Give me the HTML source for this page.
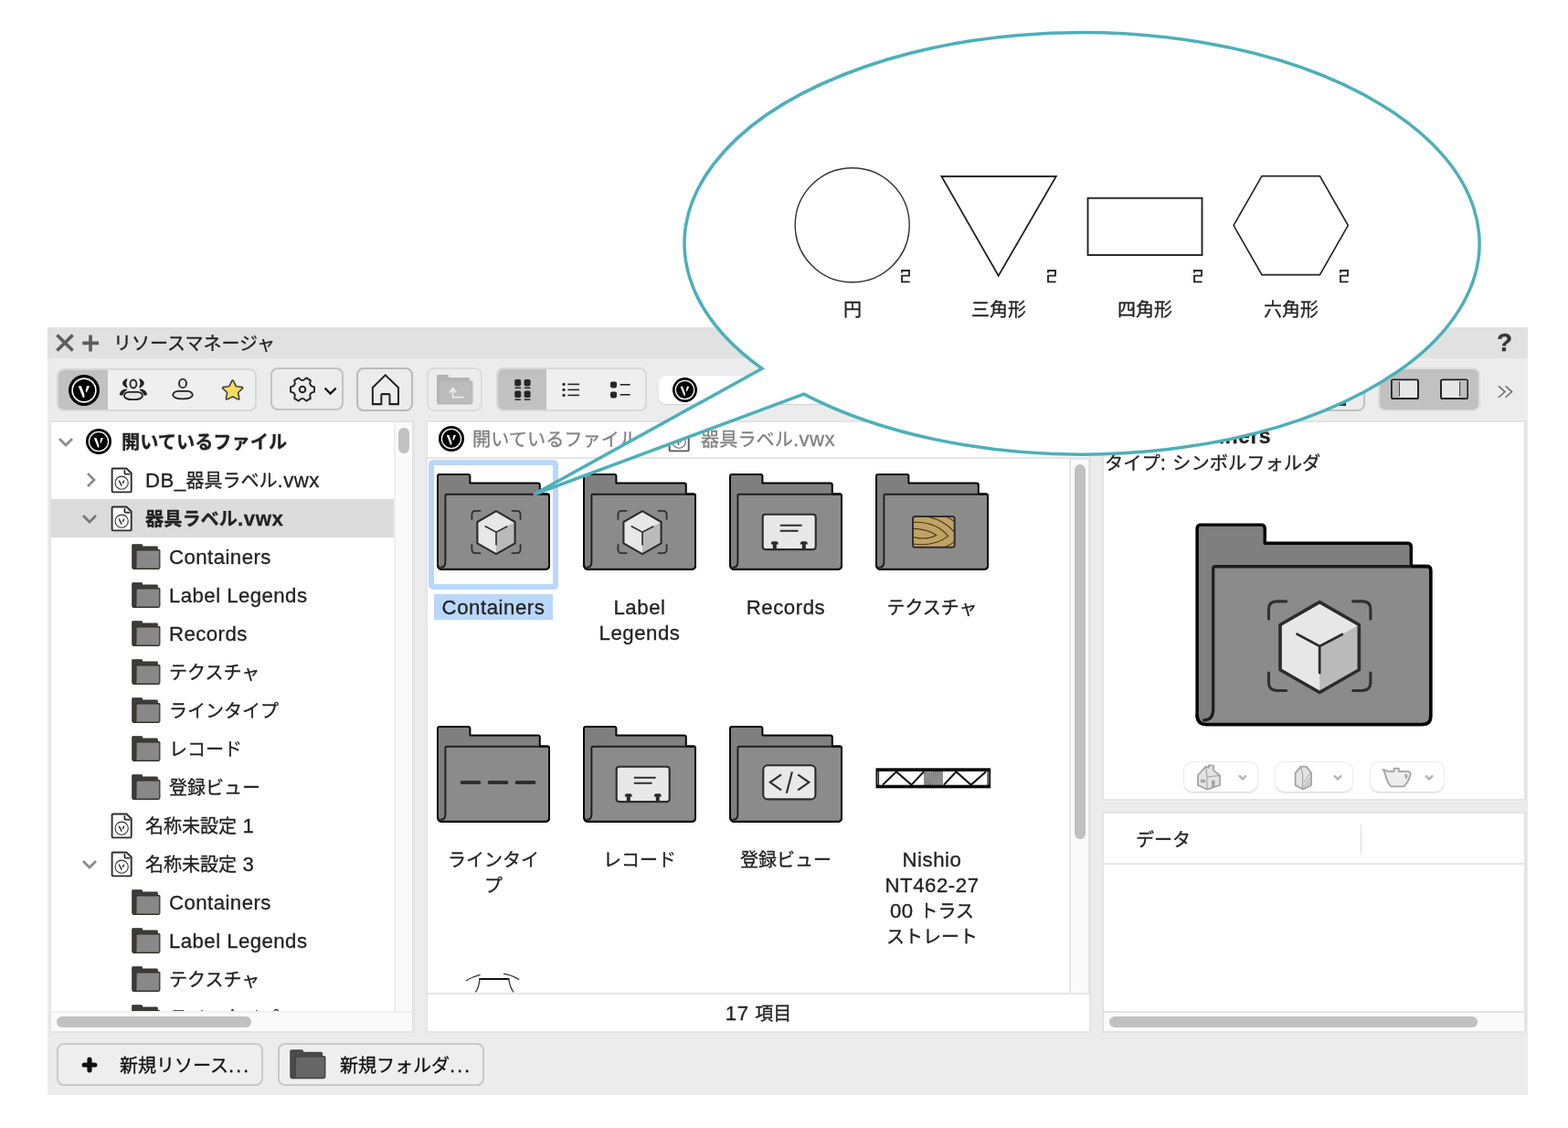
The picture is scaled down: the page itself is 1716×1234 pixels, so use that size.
<!DOCTYPE html>
<html lang="ja"><head><meta charset="utf-8"><title>リソースマネージャ</title>
<style>
html,body{margin:0;padding:0;background:#fff;}
body{width:1716px;height:1234px;position:relative;overflow:hidden;font-family:"Liberation Sans",sans-serif;}
div{position:absolute;box-sizing:border-box;}
.t{white-space:nowrap;will-change:transform;-webkit-text-stroke:0.3px;}
span.jp{font-family:"Liberation Sans","Noto Sans CJK JP",sans-serif;font-size:20px;letter-spacing:0;}
.ctr{text-align:center;white-space:nowrap;will-change:transform;-webkit-text-stroke:0.3px;}
</style></head>
<body>
<div style="left:52px;top:358px;width:1620px;height:840px;background:#ececec;"></div>
<div style="left:52px;top:358px;width:1620px;height:34px;background:#e1e1e1;"></div>
<svg style="position:absolute;left:58px;top:362px;" width="54" height="26" viewBox="0 0 54 26" preserveAspectRatio="none"><path d="M4.4 4.4 L21.6 21.6 M21.6 4.4 L4.4 21.6" stroke="#5c5c5c" stroke-width="3.6" fill="none"/><path d="M41 4.6 V22.4 M32.2 13.4 H50" stroke="#5c5c5c" stroke-width="3.6" fill="none"/></svg>
<div class="t" style="left:124px;top:362.0px;height:28px;line-height:28px;font-size:22.2px;color:#222;font-weight:normal;letter-spacing:0.45px;"><span class="jp" style="color:#222;">リソースマネージャ</span></div>
<div class="t" style="left:1637.6px;top:360.4px;height:30px;line-height:30px;font-size:28px;color:#363636;font-weight:bold;letter-spacing:0px;">?</div>
<div style="left:62px;top:402.5px;width:219px;height:47px;background:#efefef;border:2px solid #d8d8d8;border-radius:8px;overflow:hidden;"><div style="left:-2px;top:-2px;width:56px;height:47px;background:#c1c1c1;"></div></div>
<svg style="position:absolute;left:75px;top:409.5px;" width="34" height="34" viewBox="0 0 28 28" preserveAspectRatio="none"><circle cx="14" cy="14" r="14" fill="#000"/><circle cx="14" cy="14" r="10.6" fill="none" stroke="#fff" stroke-width="1.3"/><path d="M8.8 10 L11.4 10 L14.3 17.8 L14.3 20.6 L13 20.6 Z M16.4 10 L19 10 L16.2 16.2 L15.4 14.4 Z" fill="#fff"/></svg>
<svg style="position:absolute;left:120px;top:400px;" width="160" height="55" viewBox="0 0 160 55" preserveAspectRatio="none"><g fill="#e6e6e6" stroke="#222" stroke-width="1.8"><ellipse cx="25.9" cy="20" rx="3.5" ry="4.5"/><path d="M21 28.8 H30.8 Q35.4 29 36 33 Q35.4 37.2 25.9 37.2 Q16.4 37.2 15.8 33 Q16.4 29 21 28.8 Z"/><ellipse cx="80" cy="19.4" rx="4" ry="4.8"/><path d="M75 27.8 H85 Q90.2 28 90.8 32.2 Q90.2 36.4 80 36.4 Q69.8 36.4 69.2 32.2 Q69.8 28 75 27.8 Z"/></g><g fill="#222"><path d="M18.6 15 Q11 19.4 18.8 23.6 Q16.2 19.4 18.6 15 Z" stroke="#222" stroke-width="1.6" stroke-linejoin="round"/><path d="M33.2 15 Q40.8 19.4 33 23.6 Q35.6 19.4 33.2 15 Z" stroke="#222" stroke-width="1.6" stroke-linejoin="round"/><path d="M11.4 31.6 Q12.4 26.8 18.4 26.2 Q15 28.4 13.6 32 Z" stroke="#222" stroke-width="1.3" stroke-linejoin="round"/><path d="M40.4 31.6 Q39.4 26.8 33.4 26.2 Q36.8 28.4 38.2 32 Z" stroke="#222" stroke-width="1.3" stroke-linejoin="round"/></g><path d="M133.8 16.6 Q134.6 15.2 135.4 16.6 L138.3 22.6 L144.8 23.5 Q146.4 23.9 145.3 25.1 L140.6 29.6 L141.8 36 Q142 37.6 140.5 36.9 L134.6 33.8 L128.7 36.9 Q127.2 37.6 127.4 36 L128.6 29.6 L123.9 25.1 Q122.8 23.9 124.4 23.5 L130.9 22.6 Z" fill="#f7dc5f" stroke="#333" stroke-width="1.4" stroke-linejoin="round"/></svg>
<div style="left:296px;top:401.8px;width:79.5px;height:47.6px;background:#ececec;border:2px solid #c2c2c2;border-radius:8px;"></div>
<svg style="position:absolute;left:313.9px;top:409px;" width="34" height="34" viewBox="0 0 34 34" preserveAspectRatio="none"><g fill="none" stroke="#222" stroke-width="1.9" stroke-linejoin="round"><path d="M26.41 13.07 L30.02 14.30 L30.02 19.70 L26.41 20.93 L25.11 23.19 L25.85 26.93 L21.18 29.63 L18.30 27.12 L15.70 27.12 L12.82 29.63 L8.15 26.93 L8.89 23.19 L7.59 20.93 L3.98 19.70 L3.98 14.30 L7.59 13.07 L8.89 10.81 L8.15 7.07 L12.82 4.37 L15.70 6.88 L18.30 6.88 L21.18 4.37 L25.85 7.07 L25.11 10.81 Z"/><circle cx="17" cy="17" r="3.3"/></g></svg>
<svg style="position:absolute;left:353px;top:421px;" width="18" height="14" viewBox="0 0 18 14" preserveAspectRatio="none"><path d="M2.6 3.6 L8.6 9.6 L14.6 3.6" fill="none" stroke="#111" stroke-width="2.2"/></svg>
<div style="left:390px;top:402px;width:62px;height:47.5px;background:#ececec;border:2px solid #bababa;border-radius:8px;"></div>
<svg style="position:absolute;left:405px;top:407px;" width="34.2" height="38.6" viewBox="0 0 36 40" preserveAspectRatio="none"><path d="M3 17.6 L17.6 3.4 L32.6 17.6 V36.4 H22.6 V26 Q22.6 25 21.6 25 H14 Q13 25 13 26 V36.4 H3 Z" fill="none" stroke="#222" stroke-width="2.1" stroke-linejoin="miter"/></svg>
<div style="left:467px;top:402px;width:61px;height:47.5px;background:#ececec;border:2px solid #dbdbdb;border-radius:8px;"></div>
<svg style="position:absolute;left:477px;top:409px;" width="41" height="34" viewBox="0 0 41 34" preserveAspectRatio="none"><path d="M1 2 Q1 1 2 1 H13 Q14 1 14 2 V4 H36 Q37 4 37 5 V9 H4 V30 Q4 32.6 1 32.6 Z" fill="#b4b4b4"/><path d="M4.6 8 H39 Q40 8 40 9 V31 Q40 33 38 33 H2 Q4.6 32.6 4.6 30 Z" fill="#bcbcbc" stroke="#b0b0b0" stroke-width="0.8"/><path d="M15 20.4 L18.6 15.8 L22.2 20.4 M18.6 16.4 V25.6 H30.4" fill="none" stroke="#ececec" stroke-width="1.8"/></svg>
<div style="left:543px;top:402px;width:165px;height:47.5px;background:#efefef;border:2px solid #d8d8d8;border-radius:8px;overflow:hidden;"><div style="left:-2px;top:-2px;width:55px;height:48px;background:#c1c1c1;"></div></div>
<svg style="position:absolute;left:560px;top:413px;" width="24" height="28" viewBox="0 0 24 28" preserveAspectRatio="none"><g fill="#262626"><rect x="3.2" y="2" width="7" height="7.4" rx="1.8"/><rect x="13.6" y="2" width="7" height="7.4" rx="1.8"/><rect x="3.2" y="14.6" width="7" height="7.4" rx="1.8"/><rect x="13.6" y="14.6" width="7" height="7.4" rx="1.8"/><rect x="3.4" y="10.6" width="6.6" height="1.5"/><rect x="13.8" y="10.6" width="6.6" height="1.5"/><rect x="3.4" y="23.4" width="6.6" height="1.5"/><rect x="13.8" y="23.4" width="6.6" height="1.5"/></g></svg>
<svg style="position:absolute;left:613px;top:416px;" width="24" height="22" viewBox="0 0 24 22" preserveAspectRatio="none"><g fill="#262626"><circle cx="4" cy="4.4" r="1.6"/><circle cx="4" cy="10.4" r="1.6"/><circle cx="4" cy="16.4" r="1.6"/><rect x="8.4" y="3.6" width="12.6" height="1.6"/><rect x="8.4" y="9.6" width="12.6" height="1.6"/><rect x="8.4" y="15.6" width="12.6" height="1.6"/></g></svg>
<svg style="position:absolute;left:666px;top:415px;" width="26" height="24" viewBox="0 0 26 24" preserveAspectRatio="none"><g fill="#262626"><rect x="2" y="2.4" width="7" height="7" rx="1.8"/><rect x="2" y="13.4" width="7" height="7" rx="1.8"/><rect x="12.6" y="5" width="11" height="1.6"/><rect x="12.6" y="16" width="11" height="1.6"/></g></svg>
<div style="left:721px;top:411px;width:480px;height:31px;background:#fff;border-radius:8px;box-shadow:0 1px 1px rgba(0,0,0,0.12);"></div>
<svg style="position:absolute;left:736.1px;top:412.7px;" width="27.0" height="27.0" viewBox="0 0 28 28" preserveAspectRatio="none"><circle cx="14" cy="14" r="14" fill="#000"/><circle cx="14" cy="14" r="10.6" fill="none" stroke="#fff" stroke-width="1.3"/><path d="M8.8 10 L11.4 10 L14.3 17.8 L14.3 20.6 L13 20.6 Z M16.4 10 L19 10 L16.2 16.2 L15.4 14.4 Z" fill="#fff"/></svg>
<div style="left:1300px;top:403px;width:194px;height:47px;background:#ececec;border:2px solid #c2c2c2;border-radius:8px;"></div>
<div style="left:1462px;top:440.4px;width:11.4px;height:3.6px;background:#333;"></div>
<div style="left:1508px;top:402px;width:112px;height:48px;background:#c1c1c1;border:2px solid #dedede;border-radius:8px;"></div>
<svg style="position:absolute;left:1521px;top:413px;" width="34" height="26" viewBox="0 0 34 26" preserveAspectRatio="none"><rect x="2" y="2.4" width="29" height="20.6" rx="1.6" fill="#e6e6e6" stroke="#1c1c1c" stroke-width="1.9"/><path d="M10.2 4.6 V20.8" stroke="#222" stroke-width="1.2"/><rect x="2.8" y="3.2" width="7" height="19" fill="#bdbdbd"/></svg>
<svg style="position:absolute;left:1575px;top:413px;" width="34" height="26" viewBox="0 0 34 26" preserveAspectRatio="none"><rect x="2" y="2.4" width="29" height="20.6" rx="1.6" fill="#e6e6e6" stroke="#1c1c1c" stroke-width="1.9"/><path d="M22.8 4.6 V20.8" stroke="#222" stroke-width="1.2"/><rect x="23.4" y="3.2" width="7" height="19" fill="#bdbdbd"/></svg>
<svg style="position:absolute;left:1637px;top:419px;" width="22" height="18" viewBox="0 0 22 18" preserveAspectRatio="none"><path d="M3 3.4 L10 9.6 L3 15.8 M10.6 3.4 L17.6 9.6 L10.6 15.8" fill="none" stroke="#6a6a6a" stroke-width="1.5"/></svg>
<div style="left:54px;top:460px;width:400px;height:670px;background:#e4e4e4;"></div>
<div class="lp" style="left:56px;top:462px;width:375px;height:644px;background:#fff;overflow:hidden;"></div>
<div style="left:433px;top:462px;width:18px;height:644px;background:#fafafa;"></div>
<div style="left:436px;top:468px;width:12px;height:28px;background:#c1c1c1;border-radius:6px;"></div>
<div style="left:56px;top:1108px;width:395px;height:20px;background:#fafafa;"></div>
<div style="left:62px;top:1112px;width:213px;height:12px;background:#c1c1c1;border-radius:6px;"></div>
<div style="left:431px;top:462px;width:2px;height:646px;background:#efefef;"></div>
<div style="left:56px;top:1106px;width:395px;height:2px;background:#efefef;"></div>
<div style="left:0;top:0;width:431px;height:1106px;overflow:hidden;"><div style="left:56px;top:546px;width:375px;height:42px;background:#dcdcdc;"></div><svg style="position:absolute;left:62px;top:476.5px;" width="20" height="14" viewBox="0 0 20 14" preserveAspectRatio="none"><path d="M3 3 L10 10 L17 3" fill="none" stroke="#8a8a8a" stroke-width="2.7"/></svg><svg style="position:absolute;left:94px;top:469px;" width="28" height="28" viewBox="0 0 28 28" preserveAspectRatio="none"><circle cx="14" cy="14" r="14" fill="#000"/><circle cx="14" cy="14" r="10.6" fill="none" stroke="#fff" stroke-width="1.3"/><path d="M8.8 10 L11.4 10 L14.3 17.8 L14.3 20.6 L13 20.6 Z M16.4 10 L19 10 L16.2 16.2 L15.4 14.4 Z" fill="#fff"/></svg><div class="t" style="left:132.5px;top:470.0px;height:28px;line-height:28px;font-size:22.2px;color:#222;font-weight:normal;letter-spacing:0.45px;"><span class="jp" style="color:#222;font-weight:bold;font-size:20.2px;">開いているファイル</span></div><svg style="position:absolute;left:93px;top:514.5px;" width="14" height="20" viewBox="0 0 14 20" preserveAspectRatio="none"><path d="M3 3 L10 10 L3 17" fill="none" stroke="#8a8a8a" stroke-width="2.7"/></svg><svg style="position:absolute;left:121px;top:510.8px;" width="24.5" height="29" viewBox="0 0 24.5 29" preserveAspectRatio="none"><path d="M1.6 2.6 Q1.6 1.5 2.7 1.5 H17.4 L22.7 6.5 V26.3 Q22.7 27.4 21.6 27.4 H2.7 Q1.6 27.4 1.6 26.3 Z" fill="#fff" stroke="#2c2c2c" stroke-width="1.9" stroke-linejoin="round"/><path d="M15.4 3.9 V6.6 Q15.4 7.7 16.5 7.7 H20.6" fill="none" stroke="#2c2c2c" stroke-width="1.8" stroke-linecap="round"/><circle cx="12.15" cy="17.2" r="7.1" fill="none" stroke="#2c2c2c" stroke-width="1.1"/><path d="M9.2 14.6 L12.2 20.6 M14.8 14.6 L13.3 18" fill="none" stroke="#2c2c2c" stroke-width="1.4"/></svg><div class="t" style="left:158.5px;top:512.0px;height:28px;line-height:28px;font-size:22.2px;color:#222;font-weight:normal;letter-spacing:0.45px;">DB_<span class="jp" style="color:#222;">器具ラベル</span>.vwx</div><svg style="position:absolute;left:88px;top:560.5px;" width="20" height="14" viewBox="0 0 20 14" preserveAspectRatio="none"><path d="M3 3 L10 10 L17 3" fill="none" stroke="#777" stroke-width="2.7"/></svg><svg style="position:absolute;left:121px;top:552.8px;" width="24.5" height="29" viewBox="0 0 24.5 29" preserveAspectRatio="none"><path d="M1.6 2.6 Q1.6 1.5 2.7 1.5 H17.4 L22.7 6.5 V26.3 Q22.7 27.4 21.6 27.4 H2.7 Q1.6 27.4 1.6 26.3 Z" fill="#fff" stroke="#2c2c2c" stroke-width="1.9" stroke-linejoin="round"/><path d="M15.4 3.9 V6.6 Q15.4 7.7 16.5 7.7 H20.6" fill="none" stroke="#2c2c2c" stroke-width="1.8" stroke-linecap="round"/><circle cx="12.15" cy="17.2" r="7.1" fill="none" stroke="#2c2c2c" stroke-width="1.1"/><path d="M9.2 14.6 L12.2 20.6 M14.8 14.6 L13.3 18" fill="none" stroke="#2c2c2c" stroke-width="1.4"/></svg><div class="t" style="left:158.5px;top:554.0px;height:28px;line-height:28px;font-size:22.2px;color:#222;font-weight:bold;letter-spacing:0.6px;"><span class="jp" style="color:#222;font-weight:bold;font-size:20.2px;">器具ラベル</span>.vwx</div><svg style="position:absolute;left:144px;top:595px;" width="31.5" height="28.2" viewBox="0 0 31.5 27.5" preserveAspectRatio="none"><path d="M0.8 1.6 Q0.8 0.8 1.6 0.8 H10.6 Q11.4 0.8 11.4 1.6 V3 H27.4 Q28.2 3 28.2 3.8 V8 H4.6 V24.4 Q4.6 26.6 2.4 26.6 Q0.8 26.6 0.8 24.6 Z" fill="#3c3c3c" stroke="#37332c" stroke-width="1.2" stroke-linejoin="round"/><path d="M5 6.6 H30 Q30.8 6.6 30.8 7.4 V25.2 Q30.8 26.6 29.4 26.6 H2.6 Q4.8 26.4 4.8 24 Z" fill="#888" stroke="#37332c" stroke-width="1.3" stroke-linejoin="round"/></svg><div class="t" style="left:184.5px;top:596.0px;height:28px;line-height:28px;font-size:22.2px;color:#222;font-weight:normal;letter-spacing:0.45px;">Containers</div><svg style="position:absolute;left:144px;top:637px;" width="31.5" height="28.2" viewBox="0 0 31.5 27.5" preserveAspectRatio="none"><path d="M0.8 1.6 Q0.8 0.8 1.6 0.8 H10.6 Q11.4 0.8 11.4 1.6 V3 H27.4 Q28.2 3 28.2 3.8 V8 H4.6 V24.4 Q4.6 26.6 2.4 26.6 Q0.8 26.6 0.8 24.6 Z" fill="#3c3c3c" stroke="#37332c" stroke-width="1.2" stroke-linejoin="round"/><path d="M5 6.6 H30 Q30.8 6.6 30.8 7.4 V25.2 Q30.8 26.6 29.4 26.6 H2.6 Q4.8 26.4 4.8 24 Z" fill="#888" stroke="#37332c" stroke-width="1.3" stroke-linejoin="round"/></svg><div class="t" style="left:184.5px;top:638.0px;height:28px;line-height:28px;font-size:22.2px;color:#222;font-weight:normal;letter-spacing:0.45px;">Label Legends</div><svg style="position:absolute;left:144px;top:679px;" width="31.5" height="28.2" viewBox="0 0 31.5 27.5" preserveAspectRatio="none"><path d="M0.8 1.6 Q0.8 0.8 1.6 0.8 H10.6 Q11.4 0.8 11.4 1.6 V3 H27.4 Q28.2 3 28.2 3.8 V8 H4.6 V24.4 Q4.6 26.6 2.4 26.6 Q0.8 26.6 0.8 24.6 Z" fill="#3c3c3c" stroke="#37332c" stroke-width="1.2" stroke-linejoin="round"/><path d="M5 6.6 H30 Q30.8 6.6 30.8 7.4 V25.2 Q30.8 26.6 29.4 26.6 H2.6 Q4.8 26.4 4.8 24 Z" fill="#888" stroke="#37332c" stroke-width="1.3" stroke-linejoin="round"/></svg><div class="t" style="left:184.5px;top:680.0px;height:28px;line-height:28px;font-size:22.2px;color:#222;font-weight:normal;letter-spacing:0.45px;">Records</div><svg style="position:absolute;left:144px;top:721px;" width="31.5" height="28.2" viewBox="0 0 31.5 27.5" preserveAspectRatio="none"><path d="M0.8 1.6 Q0.8 0.8 1.6 0.8 H10.6 Q11.4 0.8 11.4 1.6 V3 H27.4 Q28.2 3 28.2 3.8 V8 H4.6 V24.4 Q4.6 26.6 2.4 26.6 Q0.8 26.6 0.8 24.6 Z" fill="#3c3c3c" stroke="#37332c" stroke-width="1.2" stroke-linejoin="round"/><path d="M5 6.6 H30 Q30.8 6.6 30.8 7.4 V25.2 Q30.8 26.6 29.4 26.6 H2.6 Q4.8 26.4 4.8 24 Z" fill="#888" stroke="#37332c" stroke-width="1.3" stroke-linejoin="round"/></svg><div class="t" style="left:184.5px;top:722.0px;height:28px;line-height:28px;font-size:22.2px;color:#222;font-weight:normal;letter-spacing:0.45px;"><span class="jp" style="color:#222;">テクスチャ</span></div><svg style="position:absolute;left:144px;top:763px;" width="31.5" height="28.2" viewBox="0 0 31.5 27.5" preserveAspectRatio="none"><path d="M0.8 1.6 Q0.8 0.8 1.6 0.8 H10.6 Q11.4 0.8 11.4 1.6 V3 H27.4 Q28.2 3 28.2 3.8 V8 H4.6 V24.4 Q4.6 26.6 2.4 26.6 Q0.8 26.6 0.8 24.6 Z" fill="#3c3c3c" stroke="#37332c" stroke-width="1.2" stroke-linejoin="round"/><path d="M5 6.6 H30 Q30.8 6.6 30.8 7.4 V25.2 Q30.8 26.6 29.4 26.6 H2.6 Q4.8 26.4 4.8 24 Z" fill="#888" stroke="#37332c" stroke-width="1.3" stroke-linejoin="round"/></svg><div class="t" style="left:184.5px;top:764.0px;height:28px;line-height:28px;font-size:22.2px;color:#222;font-weight:normal;letter-spacing:0.45px;"><span class="jp" style="color:#222;">ラインタイプ</span></div><svg style="position:absolute;left:144px;top:805px;" width="31.5" height="28.2" viewBox="0 0 31.5 27.5" preserveAspectRatio="none"><path d="M0.8 1.6 Q0.8 0.8 1.6 0.8 H10.6 Q11.4 0.8 11.4 1.6 V3 H27.4 Q28.2 3 28.2 3.8 V8 H4.6 V24.4 Q4.6 26.6 2.4 26.6 Q0.8 26.6 0.8 24.6 Z" fill="#3c3c3c" stroke="#37332c" stroke-width="1.2" stroke-linejoin="round"/><path d="M5 6.6 H30 Q30.8 6.6 30.8 7.4 V25.2 Q30.8 26.6 29.4 26.6 H2.6 Q4.8 26.4 4.8 24 Z" fill="#888" stroke="#37332c" stroke-width="1.3" stroke-linejoin="round"/></svg><div class="t" style="left:184.5px;top:806.0px;height:28px;line-height:28px;font-size:22.2px;color:#222;font-weight:normal;letter-spacing:0.45px;"><span class="jp" style="color:#222;">レコード</span></div><svg style="position:absolute;left:144px;top:847px;" width="31.5" height="28.2" viewBox="0 0 31.5 27.5" preserveAspectRatio="none"><path d="M0.8 1.6 Q0.8 0.8 1.6 0.8 H10.6 Q11.4 0.8 11.4 1.6 V3 H27.4 Q28.2 3 28.2 3.8 V8 H4.6 V24.4 Q4.6 26.6 2.4 26.6 Q0.8 26.6 0.8 24.6 Z" fill="#3c3c3c" stroke="#37332c" stroke-width="1.2" stroke-linejoin="round"/><path d="M5 6.6 H30 Q30.8 6.6 30.8 7.4 V25.2 Q30.8 26.6 29.4 26.6 H2.6 Q4.8 26.4 4.8 24 Z" fill="#888" stroke="#37332c" stroke-width="1.3" stroke-linejoin="round"/></svg><div class="t" style="left:184.5px;top:848.0px;height:28px;line-height:28px;font-size:22.2px;color:#222;font-weight:normal;letter-spacing:0.45px;"><span class="jp" style="color:#222;">登録ビュー</span></div><svg style="position:absolute;left:121px;top:888.8px;" width="24.5" height="29" viewBox="0 0 24.5 29" preserveAspectRatio="none"><path d="M1.6 2.6 Q1.6 1.5 2.7 1.5 H17.4 L22.7 6.5 V26.3 Q22.7 27.4 21.6 27.4 H2.7 Q1.6 27.4 1.6 26.3 Z" fill="#fff" stroke="#2c2c2c" stroke-width="1.9" stroke-linejoin="round"/><path d="M15.4 3.9 V6.6 Q15.4 7.7 16.5 7.7 H20.6" fill="none" stroke="#2c2c2c" stroke-width="1.8" stroke-linecap="round"/><circle cx="12.15" cy="17.2" r="7.1" fill="none" stroke="#2c2c2c" stroke-width="1.1"/><path d="M9.2 14.6 L12.2 20.6 M14.8 14.6 L13.3 18" fill="none" stroke="#2c2c2c" stroke-width="1.4"/></svg><div class="t" style="left:158.5px;top:890.0px;height:28px;line-height:28px;font-size:22.2px;color:#222;font-weight:normal;letter-spacing:0.45px;"><span class="jp" style="color:#222;">名称未設定</span> 1</div><svg style="position:absolute;left:88px;top:938.5px;" width="20" height="14" viewBox="0 0 20 14" preserveAspectRatio="none"><path d="M3 3 L10 10 L17 3" fill="none" stroke="#8a8a8a" stroke-width="2.7"/></svg><svg style="position:absolute;left:121px;top:930.8px;" width="24.5" height="29" viewBox="0 0 24.5 29" preserveAspectRatio="none"><path d="M1.6 2.6 Q1.6 1.5 2.7 1.5 H17.4 L22.7 6.5 V26.3 Q22.7 27.4 21.6 27.4 H2.7 Q1.6 27.4 1.6 26.3 Z" fill="#fff" stroke="#2c2c2c" stroke-width="1.9" stroke-linejoin="round"/><path d="M15.4 3.9 V6.6 Q15.4 7.7 16.5 7.7 H20.6" fill="none" stroke="#2c2c2c" stroke-width="1.8" stroke-linecap="round"/><circle cx="12.15" cy="17.2" r="7.1" fill="none" stroke="#2c2c2c" stroke-width="1.1"/><path d="M9.2 14.6 L12.2 20.6 M14.8 14.6 L13.3 18" fill="none" stroke="#2c2c2c" stroke-width="1.4"/></svg><div class="t" style="left:158.5px;top:932.0px;height:28px;line-height:28px;font-size:22.2px;color:#222;font-weight:normal;letter-spacing:0.45px;"><span class="jp" style="color:#222;">名称未設定</span> 3</div><svg style="position:absolute;left:144px;top:973px;" width="31.5" height="28.2" viewBox="0 0 31.5 27.5" preserveAspectRatio="none"><path d="M0.8 1.6 Q0.8 0.8 1.6 0.8 H10.6 Q11.4 0.8 11.4 1.6 V3 H27.4 Q28.2 3 28.2 3.8 V8 H4.6 V24.4 Q4.6 26.6 2.4 26.6 Q0.8 26.6 0.8 24.6 Z" fill="#3c3c3c" stroke="#37332c" stroke-width="1.2" stroke-linejoin="round"/><path d="M5 6.6 H30 Q30.8 6.6 30.8 7.4 V25.2 Q30.8 26.6 29.4 26.6 H2.6 Q4.8 26.4 4.8 24 Z" fill="#888" stroke="#37332c" stroke-width="1.3" stroke-linejoin="round"/></svg><div class="t" style="left:184.5px;top:974.0px;height:28px;line-height:28px;font-size:22.2px;color:#222;font-weight:normal;letter-spacing:0.45px;">Containers</div><svg style="position:absolute;left:144px;top:1015px;" width="31.5" height="28.2" viewBox="0 0 31.5 27.5" preserveAspectRatio="none"><path d="M0.8 1.6 Q0.8 0.8 1.6 0.8 H10.6 Q11.4 0.8 11.4 1.6 V3 H27.4 Q28.2 3 28.2 3.8 V8 H4.6 V24.4 Q4.6 26.6 2.4 26.6 Q0.8 26.6 0.8 24.6 Z" fill="#3c3c3c" stroke="#37332c" stroke-width="1.2" stroke-linejoin="round"/><path d="M5 6.6 H30 Q30.8 6.6 30.8 7.4 V25.2 Q30.8 26.6 29.4 26.6 H2.6 Q4.8 26.4 4.8 24 Z" fill="#888" stroke="#37332c" stroke-width="1.3" stroke-linejoin="round"/></svg><div class="t" style="left:184.5px;top:1016.0px;height:28px;line-height:28px;font-size:22.2px;color:#222;font-weight:normal;letter-spacing:0.45px;">Label Legends</div><svg style="position:absolute;left:144px;top:1057px;" width="31.5" height="28.2" viewBox="0 0 31.5 27.5" preserveAspectRatio="none"><path d="M0.8 1.6 Q0.8 0.8 1.6 0.8 H10.6 Q11.4 0.8 11.4 1.6 V3 H27.4 Q28.2 3 28.2 3.8 V8 H4.6 V24.4 Q4.6 26.6 2.4 26.6 Q0.8 26.6 0.8 24.6 Z" fill="#3c3c3c" stroke="#37332c" stroke-width="1.2" stroke-linejoin="round"/><path d="M5 6.6 H30 Q30.8 6.6 30.8 7.4 V25.2 Q30.8 26.6 29.4 26.6 H2.6 Q4.8 26.4 4.8 24 Z" fill="#888" stroke="#37332c" stroke-width="1.3" stroke-linejoin="round"/></svg><div class="t" style="left:184.5px;top:1058.0px;height:28px;line-height:28px;font-size:22.2px;color:#222;font-weight:normal;letter-spacing:0.45px;"><span class="jp" style="color:#222;">テクスチャ</span></div><svg style="position:absolute;left:144px;top:1099px;" width="31.5" height="28.2" viewBox="0 0 31.5 27.5" preserveAspectRatio="none"><path d="M0.8 1.6 Q0.8 0.8 1.6 0.8 H10.6 Q11.4 0.8 11.4 1.6 V3 H27.4 Q28.2 3 28.2 3.8 V8 H4.6 V24.4 Q4.6 26.6 2.4 26.6 Q0.8 26.6 0.8 24.6 Z" fill="#3c3c3c" stroke="#37332c" stroke-width="1.2" stroke-linejoin="round"/><path d="M5 6.6 H30 Q30.8 6.6 30.8 7.4 V25.2 Q30.8 26.6 29.4 26.6 H2.6 Q4.8 26.4 4.8 24 Z" fill="#888" stroke="#37332c" stroke-width="1.3" stroke-linejoin="round"/></svg><div class="t" style="left:184.5px;top:1100.0px;height:28px;line-height:28px;font-size:22.2px;color:#222;font-weight:normal;letter-spacing:0.45px;"><span class="jp" style="color:#222;">ラインタイプ</span></div></div>
<div style="left:62px;top:1140.5px;width:226px;height:47.5px;background:#eeeeee;border:2px solid #c8c8c8;border-radius:8px;"></div>
<svg style="position:absolute;left:88px;top:1155px;" width="20" height="20" viewBox="0 0 20 20" preserveAspectRatio="none"><path d="M10 4.2 V15.8 M4.2 10 H15.8" stroke="#111" stroke-width="5.2" stroke-linecap="round" fill="none"/></svg>
<div class="t" style="left:130.5px;top:1152.0px;height:28px;line-height:28px;font-size:22.2px;color:#111;font-weight:normal;letter-spacing:0.45px;"><span class="jp" style="color:#111;">新規リソース</span><span style="letter-spacing:1.8px">...</span></div>
<div style="left:304px;top:1140.5px;width:226px;height:47.5px;background:#eeeeee;border:2px solid #c8c8c8;border-radius:8px;"></div>
<svg style="position:absolute;left:317px;top:1148px;" width="39.5" height="32.5" viewBox="0 0 31.5 27.5" preserveAspectRatio="none"><path d="M0.8 1.6 Q0.8 0.8 1.6 0.8 H10.6 Q11.4 0.8 11.4 1.6 V3 H27.4 Q28.2 3 28.2 3.8 V8 H4.6 V24.4 Q4.6 26.6 2.4 26.6 Q0.8 26.6 0.8 24.6 Z" fill="#4a4a4a" stroke="#444" stroke-width="1.2" stroke-linejoin="round"/><path d="M5 6.6 H30 Q30.8 6.6 30.8 7.4 V25.2 Q30.8 26.6 29.4 26.6 H2.6 Q4.8 26.4 4.8 24 Z" fill="#666" stroke="#444" stroke-width="1.3" stroke-linejoin="round"/></svg>
<div class="t" style="left:372px;top:1152.0px;height:28px;line-height:28px;font-size:22.2px;color:#111;font-weight:normal;letter-spacing:0.45px;"><span class="jp" style="color:#111;">新規フォルダ</span><span style="letter-spacing:1.8px">...</span></div>
<div style="left:466px;top:460px;width:728px;height:670px;background:#e4e4e4;"></div>
<div style="left:468px;top:462px;width:702px;height:624px;background:#fff;"></div>
<div style="left:1172px;top:503px;width:19px;height:583px;background:#fafafa;"></div>
<div style="left:1170px;top:462px;width:22px;height:39px;background:#fff;"></div>
<div style="left:468px;top:500px;width:724px;height:2px;background:#e6e6e6;"></div>
<div style="left:1176px;top:508px;width:12px;height:410px;background:#c1c1c1;border-radius:6px;"></div>
<div style="left:468px;top:1088px;width:724px;height:40px;background:#fff;"></div>
<svg style="position:absolute;left:480px;top:466px;" width="28" height="28" viewBox="0 0 28 28" preserveAspectRatio="none"><circle cx="14" cy="14" r="14" fill="#000"/><circle cx="14" cy="14" r="10.6" fill="none" stroke="#fff" stroke-width="1.3"/><path d="M8.8 10 L11.4 10 L14.3 17.8 L14.3 20.6 L13 20.6 Z M16.4 10 L19 10 L16.2 16.2 L15.4 14.4 Z" fill="#fff"/></svg>
<div class="t" style="left:517px;top:466.6px;height:28px;line-height:28px;font-size:22.2px;color:#222;font-weight:normal;letter-spacing:0.45px;"><span class="jp" style="color:#808080;font-size:20.2px;">開いているファイル</span></div>
<svg style="position:absolute;left:731.4px;top:466.40000000000003px;" width="24.5" height="29" viewBox="0 0 24.5 29" preserveAspectRatio="none"><path d="M1.6 2.6 Q1.6 1.5 2.7 1.5 H17.4 L22.7 6.5 V26.3 Q22.7 27.4 21.6 27.4 H2.7 Q1.6 27.4 1.6 26.3 Z" fill="#fff" stroke="#5a5a5a" stroke-width="1.9" stroke-linejoin="round"/><path d="M15.4 3.9 V6.6 Q15.4 7.7 16.5 7.7 H20.6" fill="none" stroke="#5a5a5a" stroke-width="1.8" stroke-linecap="round"/><circle cx="12.15" cy="17.2" r="7.1" fill="none" stroke="#5a5a5a" stroke-width="1.1"/><path d="M9.2 14.6 L12.2 20.6 M14.8 14.6 L13.3 18" fill="none" stroke="#5a5a5a" stroke-width="1.4"/></svg>
<div class="t" style="left:766.5px;top:466.6px;height:28px;line-height:28px;font-size:22.2px;color:#808080;font-weight:normal;letter-spacing:0.45px;"><span class="jp" style="color:#808080;font-size:20.2px;">器具ラベル</span>.vwx</div>
<div style="left:469px;top:503px;width:142px;height:141.6px;border-radius:5px;background:#b9d7fb;"></div>
<div style="left:475px;top:509px;width:130px;height:129.8px;background:#fff;"></div>
<div style="left:475px;top:650px;width:130px;height:27.5px;background:#b9d7fb;"></div>
<svg style="position:absolute;left:478px;top:518px;" width="124.0" height="106.0" viewBox="0 0 124 106" preserveAspectRatio="none"><path d="M1 3 Q1 1 3 1 H34.4 Q36.4 1 36.4 3 V10.6 H110.8 Q112.8 10.6 112.8 12.6 V22.6 H121 Q123 22.6 123 24.6 V100.4 Q123 104.8 118.6 104.8 H6 Q1 104.8 1 99.8 Z" fill="#7f7f7f" stroke="#050505" stroke-width="2" stroke-linejoin="round"/><path d="M9.3 24.6 Q9.3 22.6 11.3 22.6 H121 Q123 22.6 123 24.6 V100.4 Q123 104.8 118.6 104.8 H6 Q3.6 104.8 2.4 103.4 Q9.3 103.6 9.3 97 Z" fill="#8b8b8b"/><path d="M122 22.7 H10.6 Q9.4 22.7 9.4 23.9 V97 Q9.4 102.6 4.6 102.6" fill="none" stroke="#1e1e1e" stroke-width="1.9" stroke-linecap="round"/><path d="M112.8 22.6 H121 Q123 22.6 123 24.6 V100.4 Q123 104.8 118.6 104.8 H6 Q1 104.8 1 99.8" fill="none" stroke="#050505" stroke-width="2"/><g fill="none" stroke="#303030" stroke-width="1.8" stroke-linecap="round"><path d="M38.4 50 V45 Q38.4 40.8 42.6 40.8 H47.6"/><path d="M82.4 40.8 H87.4 Q91.6 40.8 91.6 45 V50"/><path d="M38.4 78 V83 Q38.4 87.2 42.6 87.2 H47.6"/><path d="M82.4 87.2 H87.4 Q91.6 87.2 91.6 83 V78"/></g><path d="M65 41.2 L85.6 53 V76.4 L65 88.2 L44.4 76.4 V53 Z" fill="#e7e7e7"/><path d="M65 64.6 L85.6 53 V76.4 L65 88.2 Z" fill="#bababa"/><path d="M65 41.2 L85.6 53 V76.4 L65 88.2 L44.4 76.4 V53 Z" fill="none" stroke="#2b2b2b" stroke-width="2.1" stroke-linejoin="round"/><path d="M53.2 57.8 L65 64.2 L76.8 58 M65 64.2 V78" fill="none" stroke="#2b2b2b" stroke-width="1.6" stroke-linecap="round"/></svg>
<svg style="position:absolute;left:638px;top:518px;" width="124.0" height="106.0" viewBox="0 0 124 106" preserveAspectRatio="none"><path d="M1 3 Q1 1 3 1 H34.4 Q36.4 1 36.4 3 V10.6 H110.8 Q112.8 10.6 112.8 12.6 V22.6 H121 Q123 22.6 123 24.6 V100.4 Q123 104.8 118.6 104.8 H6 Q1 104.8 1 99.8 Z" fill="#7f7f7f" stroke="#050505" stroke-width="2" stroke-linejoin="round"/><path d="M9.3 24.6 Q9.3 22.6 11.3 22.6 H121 Q123 22.6 123 24.6 V100.4 Q123 104.8 118.6 104.8 H6 Q3.6 104.8 2.4 103.4 Q9.3 103.6 9.3 97 Z" fill="#8b8b8b"/><path d="M122 22.7 H10.6 Q9.4 22.7 9.4 23.9 V97 Q9.4 102.6 4.6 102.6" fill="none" stroke="#1e1e1e" stroke-width="1.9" stroke-linecap="round"/><path d="M112.8 22.6 H121 Q123 22.6 123 24.6 V100.4 Q123 104.8 118.6 104.8 H6 Q1 104.8 1 99.8" fill="none" stroke="#050505" stroke-width="2"/><g fill="none" stroke="#303030" stroke-width="1.8" stroke-linecap="round"><path d="M38.4 50 V45 Q38.4 40.8 42.6 40.8 H47.6"/><path d="M82.4 40.8 H87.4 Q91.6 40.8 91.6 45 V50"/><path d="M38.4 78 V83 Q38.4 87.2 42.6 87.2 H47.6"/><path d="M82.4 87.2 H87.4 Q91.6 87.2 91.6 83 V78"/></g><path d="M65 41.2 L85.6 53 V76.4 L65 88.2 L44.4 76.4 V53 Z" fill="#e7e7e7"/><path d="M65 64.6 L85.6 53 V76.4 L65 88.2 Z" fill="#bababa"/><path d="M65 41.2 L85.6 53 V76.4 L65 88.2 L44.4 76.4 V53 Z" fill="none" stroke="#2b2b2b" stroke-width="2.1" stroke-linejoin="round"/><path d="M53.2 57.8 L65 64.2 L76.8 58 M65 64.2 V78" fill="none" stroke="#2b2b2b" stroke-width="1.6" stroke-linecap="round"/></svg>
<svg style="position:absolute;left:798px;top:518px;" width="124.0" height="106.0" viewBox="0 0 124 106" preserveAspectRatio="none"><path d="M1 3 Q1 1 3 1 H34.4 Q36.4 1 36.4 3 V10.6 H110.8 Q112.8 10.6 112.8 12.6 V22.6 H121 Q123 22.6 123 24.6 V100.4 Q123 104.8 118.6 104.8 H6 Q1 104.8 1 99.8 Z" fill="#7f7f7f" stroke="#050505" stroke-width="2" stroke-linejoin="round"/><path d="M9.3 24.6 Q9.3 22.6 11.3 22.6 H121 Q123 22.6 123 24.6 V100.4 Q123 104.8 118.6 104.8 H6 Q3.6 104.8 2.4 103.4 Q9.3 103.6 9.3 97 Z" fill="#8b8b8b"/><path d="M122 22.7 H10.6 Q9.4 22.7 9.4 23.9 V97 Q9.4 102.6 4.6 102.6" fill="none" stroke="#1e1e1e" stroke-width="1.9" stroke-linecap="round"/><path d="M112.8 22.6 H121 Q123 22.6 123 24.6 V100.4 Q123 104.8 118.6 104.8 H6 Q1 104.8 1 99.8" fill="none" stroke="#050505" stroke-width="2"/><rect x="36.7" y="44.7" width="58" height="38.4" rx="3" fill="#e8e8e8" stroke="#2b2b2b" stroke-width="2.1"/><path d="M55.8 56.8 H79.6 M55.8 62.8 H75.6" stroke="#2e2e2e" stroke-width="2" fill="none"/><path d="M45.8 77.6 Q45.8 74.2 48 74.2 H51.6 Q53.8 74.2 53.8 77.6 H51.8 V83 H47.8 V77.6 Z M77.8 77.6 Q77.8 74.2 80 74.2 H83.6 Q85.8 74.2 85.8 77.6 H83.8 V83 H79.8 V77.6 Z" fill="#2b2b2b"/></svg>
<svg style="position:absolute;left:958px;top:518px;" width="124.0" height="106.0" viewBox="0 0 124 106" preserveAspectRatio="none"><path d="M1 3 Q1 1 3 1 H34.4 Q36.4 1 36.4 3 V10.6 H110.8 Q112.8 10.6 112.8 12.6 V22.6 H121 Q123 22.6 123 24.6 V100.4 Q123 104.8 118.6 104.8 H6 Q1 104.8 1 99.8 Z" fill="#7f7f7f" stroke="#050505" stroke-width="2" stroke-linejoin="round"/><path d="M9.3 24.6 Q9.3 22.6 11.3 22.6 H121 Q123 22.6 123 24.6 V100.4 Q123 104.8 118.6 104.8 H6 Q3.6 104.8 2.4 103.4 Q9.3 103.6 9.3 97 Z" fill="#8b8b8b"/><path d="M122 22.7 H10.6 Q9.4 22.7 9.4 23.9 V97 Q9.4 102.6 4.6 102.6" fill="none" stroke="#1e1e1e" stroke-width="1.9" stroke-linecap="round"/><path d="M112.8 22.6 H121 Q123 22.6 123 24.6 V100.4 Q123 104.8 118.6 104.8 H6 Q1 104.8 1 99.8" fill="none" stroke="#050505" stroke-width="2"/><clipPath id="txc"><rect x="41" y="46.9" width="45.7" height="33.9" rx="2.6"/></clipPath><rect x="41" y="46.9" width="45.7" height="33.9" rx="2.6" fill="#c0a266"/><g clip-path="url(#txc)" fill="none" stroke="#4a3611" stroke-width="1.1"><path d="M40 60.4 Q56 60.4 66.8 67.5 Q56 73.4 40 69.4"/><path d="M40 53.4 Q66 52 79.7 68.4 Q64 80.6 40 76.8"/><path d="M56 47 Q76 51 87 64.6"/><path d="M77 47 Q83 49.6 87 52.8"/><path d="M76 80.4 Q82 78.4 87 74.4"/></g><rect x="41" y="46.9" width="45.7" height="33.9" rx="2.6" fill="none" stroke="#2d3034" stroke-width="2"/></svg>
<svg style="position:absolute;left:478px;top:794px;" width="124.0" height="106.0" viewBox="0 0 124 106" preserveAspectRatio="none"><path d="M1 3 Q1 1 3 1 H34.4 Q36.4 1 36.4 3 V10.6 H110.8 Q112.8 10.6 112.8 12.6 V22.6 H121 Q123 22.6 123 24.6 V100.4 Q123 104.8 118.6 104.8 H6 Q1 104.8 1 99.8 Z" fill="#7f7f7f" stroke="#050505" stroke-width="2" stroke-linejoin="round"/><path d="M9.3 24.6 Q9.3 22.6 11.3 22.6 H121 Q123 22.6 123 24.6 V100.4 Q123 104.8 118.6 104.8 H6 Q3.6 104.8 2.4 103.4 Q9.3 103.6 9.3 97 Z" fill="#8b8b8b"/><path d="M122 22.7 H10.6 Q9.4 22.7 9.4 23.9 V97 Q9.4 102.6 4.6 102.6" fill="none" stroke="#1e1e1e" stroke-width="1.9" stroke-linecap="round"/><path d="M112.8 22.6 H121 Q123 22.6 123 24.6 V100.4 Q123 104.8 118.6 104.8 H6 Q1 104.8 1 99.8" fill="none" stroke="#050505" stroke-width="2"/><path d="M27.6 61.9 H46.4 M57.6 61.9 H76.4 M87.6 61.9 H106.4" stroke="#2e2e2e" stroke-width="4" stroke-linecap="round" fill="none"/></svg>
<svg style="position:absolute;left:638px;top:794px;" width="124.0" height="106.0" viewBox="0 0 124 106" preserveAspectRatio="none"><path d="M1 3 Q1 1 3 1 H34.4 Q36.4 1 36.4 3 V10.6 H110.8 Q112.8 10.6 112.8 12.6 V22.6 H121 Q123 22.6 123 24.6 V100.4 Q123 104.8 118.6 104.8 H6 Q1 104.8 1 99.8 Z" fill="#7f7f7f" stroke="#050505" stroke-width="2" stroke-linejoin="round"/><path d="M9.3 24.6 Q9.3 22.6 11.3 22.6 H121 Q123 22.6 123 24.6 V100.4 Q123 104.8 118.6 104.8 H6 Q3.6 104.8 2.4 103.4 Q9.3 103.6 9.3 97 Z" fill="#8b8b8b"/><path d="M122 22.7 H10.6 Q9.4 22.7 9.4 23.9 V97 Q9.4 102.6 4.6 102.6" fill="none" stroke="#1e1e1e" stroke-width="1.9" stroke-linecap="round"/><path d="M112.8 22.6 H121 Q123 22.6 123 24.6 V100.4 Q123 104.8 118.6 104.8 H6 Q1 104.8 1 99.8" fill="none" stroke="#050505" stroke-width="2"/><rect x="36.7" y="44.7" width="58" height="38.4" rx="3" fill="#e8e8e8" stroke="#2b2b2b" stroke-width="2.1"/><path d="M55.8 56.8 H79.6 M55.8 62.8 H75.6" stroke="#2e2e2e" stroke-width="2" fill="none"/><path d="M45.8 77.6 Q45.8 74.2 48 74.2 H51.6 Q53.8 74.2 53.8 77.6 H51.8 V83 H47.8 V77.6 Z M77.8 77.6 Q77.8 74.2 80 74.2 H83.6 Q85.8 74.2 85.8 77.6 H83.8 V83 H79.8 V77.6 Z" fill="#2b2b2b"/></svg>
<svg style="position:absolute;left:798px;top:794px;" width="124.0" height="106.0" viewBox="0 0 124 106" preserveAspectRatio="none"><path d="M1 3 Q1 1 3 1 H34.4 Q36.4 1 36.4 3 V10.6 H110.8 Q112.8 10.6 112.8 12.6 V22.6 H121 Q123 22.6 123 24.6 V100.4 Q123 104.8 118.6 104.8 H6 Q1 104.8 1 99.8 Z" fill="#7f7f7f" stroke="#050505" stroke-width="2" stroke-linejoin="round"/><path d="M9.3 24.6 Q9.3 22.6 11.3 22.6 H121 Q123 22.6 123 24.6 V100.4 Q123 104.8 118.6 104.8 H6 Q3.6 104.8 2.4 103.4 Q9.3 103.6 9.3 97 Z" fill="#8b8b8b"/><path d="M122 22.7 H10.6 Q9.4 22.7 9.4 23.9 V97 Q9.4 102.6 4.6 102.6" fill="none" stroke="#1e1e1e" stroke-width="1.9" stroke-linecap="round"/><path d="M112.8 22.6 H121 Q123 22.6 123 24.6 V100.4 Q123 104.8 118.6 104.8 H6 Q1 104.8 1 99.8" fill="none" stroke="#050505" stroke-width="2"/><rect x="37.3" y="43.2" width="57.1" height="37.2" rx="5" fill="#e8e8e8" stroke="#2b2b2b" stroke-width="2.1"/><path d="M57 53.4 L44.8 61.8 L57 70.4 M62.8 73.8 L68.9 50.2 M75.2 53.4 L87.4 61.8 L75.2 70.4" fill="none" stroke="#2e2e2e" stroke-width="2.1" stroke-linejoin="miter"/></svg>
<div class="ctr" style="left:440px;top:651px;width:200px;height:28px;line-height:28px;font-size:22.2px;letter-spacing:0.55px;color:#222;">Containers</div>
<div class="ctr" style="left:600px;top:651px;width:200px;height:28px;line-height:28px;font-size:22.2px;letter-spacing:0.55px;color:#222;">Label</div>
<div class="ctr" style="left:600px;top:679px;width:200px;height:28px;line-height:28px;font-size:22.2px;letter-spacing:0.55px;color:#222;">Legends</div>
<div class="ctr" style="left:760px;top:651px;width:200px;height:28px;line-height:28px;font-size:22.2px;letter-spacing:0.55px;color:#222;">Records</div>
<div class="ctr" style="left:920px;top:651px;width:200px;height:28px;line-height:28px;font-size:22.2px;letter-spacing:0.55px;color:#222;"><span class="jp" style="color:#222;">テクスチャ</span></div>
<div class="ctr" style="left:440px;top:927px;width:200px;height:28px;line-height:28px;font-size:22.2px;letter-spacing:0.55px;color:#222;"><span class="jp" style="color:#222;">ラインタイ</span></div>
<div class="ctr" style="left:440px;top:955px;width:200px;height:28px;line-height:28px;font-size:22.2px;letter-spacing:0.55px;color:#222;"><span class="jp" style="color:#222;">プ</span></div>
<div class="ctr" style="left:600px;top:927px;width:200px;height:28px;line-height:28px;font-size:22.2px;letter-spacing:0.55px;color:#222;"><span class="jp" style="color:#222;">レコード</span></div>
<div class="ctr" style="left:760px;top:927px;width:200px;height:28px;line-height:28px;font-size:22.2px;letter-spacing:0.55px;color:#222;"><span class="jp" style="color:#222;">登録ビュー</span></div>
<div class="ctr" style="left:920px;top:927px;width:200px;height:28px;line-height:28px;font-size:22.2px;letter-spacing:0.55px;color:#222;">Nishio</div>
<div class="ctr" style="left:920px;top:955px;width:200px;height:28px;line-height:28px;font-size:22.2px;letter-spacing:0.55px;color:#222;">NT462-27</div>
<div class="ctr" style="left:920px;top:983px;width:200px;height:28px;line-height:28px;font-size:22.2px;letter-spacing:0.55px;color:#222;">00 <span class="jp" style="color:#222;">トラス</span></div>
<div class="ctr" style="left:920px;top:1011px;width:200px;height:28px;line-height:28px;font-size:22.2px;letter-spacing:0.55px;color:#222;"><span class="jp" style="color:#222;">ストレート</span></div>
<svg style="position:absolute;left:957.6px;top:839.5px;" width="127" height="23" viewBox="0 0 127 23" preserveAspectRatio="none"><rect x="2.3" y="2.1" width="122" height="18.4" fill="#fff" stroke="#080808" stroke-width="3.6"/><path d="M2.6 4 V18.6 M124 4 V18.6" stroke="#777" stroke-width="1.4"/><path d="M8 18.6 L23 4.2 L39.4 18.6 L53 4.2 M75 18.6 L88.4 4.2 L104.6 18.6 L121 4.2" fill="none" stroke="#111" stroke-width="2"/><defs><pattern id="chk" width="2.1" height="2.1" patternUnits="userSpaceOnUse"><rect width="1.05" height="1.05" fill="#111"/><rect x="1.05" y="1.05" width="1.05" height="1.05" fill="#111"/></pattern></defs><rect x="53" y="3.4" width="21" height="15.8" fill="url(#chk)"/></svg>
<svg style="position:absolute;left:506px;top:1062px;" width="66" height="24" viewBox="0 0 66 24" preserveAspectRatio="none"><path d="M18.4 9 H51.2" fill="none" stroke="#111" stroke-width="2"/><path d="M3.8 11 Q11 6.4 19.6 4.4 M45 3.4 Q54 4.6 62.2 9.6 M19 8 Q18.8 17 14.4 23.4 M50.8 8 Q51.4 17 56 23.4" fill="none" stroke="#333" stroke-width="1.3"/></svg>
<div style="left:468px;top:1086px;width:724px;height:2px;background:#e6e6e6;"></div>
<div class="ctr" style="left:730px;top:1095px;width:200px;height:28px;line-height:28px;font-size:22.2px;letter-spacing:0.55px;color:#222;">17 <span class="jp" style="color:#222;">項目</span></div>
<div style="left:1206px;top:460px;width:465px;height:416px;background:#e4e4e4;"></div>
<div style="left:1208px;top:462px;width:460px;height:412px;background:#fff;"></div>
<div class="t" style="left:1265.5px;top:463.0px;height:28px;line-height:28px;font-size:23px;color:#222;font-weight:bold;letter-spacing:0.5px;">Containers</div>
<div class="t" style="left:1208.5px;top:493.0px;height:28px;line-height:28px;font-size:22.2px;color:#222;font-weight:normal;letter-spacing:0.45px;"><span class="jp" style="color:#222;font-size:20.3px;">タイプ</span>: <span class="jp" style="color:#222;font-size:20.3px;">シンボルフォルダ</span></div>
<svg style="position:absolute;left:1308px;top:571.5px;" width="259.8" height="223" viewBox="0 0 124 106" preserveAspectRatio="none"><path d="M1 3 Q1 1 3 1 H34.4 Q36.4 1 36.4 3 V10.6 H110.8 Q112.8 10.6 112.8 12.6 V22.6 H121 Q123 22.6 123 24.6 V100.4 Q123 104.8 118.6 104.8 H6 Q1 104.8 1 99.8 Z" fill="#7f7f7f" stroke="#050505" stroke-width="1.64" stroke-linejoin="round"/><path d="M9.3 24.6 Q9.3 22.6 11.3 22.6 H121 Q123 22.6 123 24.6 V100.4 Q123 104.8 118.6 104.8 H6 Q3.6 104.8 2.4 103.4 Q9.3 103.6 9.3 97 Z" fill="#8b8b8b"/><path d="M122 22.7 H10.6 Q9.4 22.7 9.4 23.9 V97 Q9.4 102.6 4.6 102.6" fill="none" stroke="#1e1e1e" stroke-width="1.56" stroke-linecap="round"/><path d="M112.8 22.6 H121 Q123 22.6 123 24.6 V100.4 Q123 104.8 118.6 104.8 H6 Q1 104.8 1 99.8" fill="none" stroke="#050505" stroke-width="1.64"/><g fill="none" stroke="#303030" stroke-width="1.48" stroke-linecap="round"><path d="M38.4 50 V45 Q38.4 40.8 42.6 40.8 H47.6"/><path d="M82.4 40.8 H87.4 Q91.6 40.8 91.6 45 V50"/><path d="M38.4 78 V83 Q38.4 87.2 42.6 87.2 H47.6"/><path d="M82.4 87.2 H87.4 Q91.6 87.2 91.6 83 V78"/></g><path d="M65 41.2 L85.6 53 V76.4 L65 88.2 L44.4 76.4 V53 Z" fill="#e7e7e7"/><path d="M65 64.6 L85.6 53 V76.4 L65 88.2 Z" fill="#bababa"/><path d="M65 41.2 L85.6 53 V76.4 L65 88.2 L44.4 76.4 V53 Z" fill="none" stroke="#2b2b2b" stroke-width="1.72" stroke-linejoin="round"/><path d="M53.2 57.8 L65 64.2 L76.8 58 M65 64.2 V78" fill="none" stroke="#2b2b2b" stroke-width="1.31" stroke-linecap="round"/></svg>
<div style="left:1296px;top:833.5px;width:80px;height:32.5px;background:#fff;border-radius:9px;box-shadow:0 0.5px 2.5px rgba(0,0,0,0.2);"></div><svg style="position:absolute;left:1352.5px;top:845px;" width="14" height="12" viewBox="0 0 14 12" preserveAspectRatio="none"><path d="M3 3.4 L7 7.4 L11 3.4" fill="none" stroke="#b2b2b2" stroke-width="2.3"/></svg><svg style="position:absolute;left:1308px;top:835px;" width="30" height="30" viewBox="0 0 30 30" preserveAspectRatio="none"><path d="M3 13 L11.6 3.6 L15 4.6 V2 L20 2.6 V7.6 L27 13.4 V24 L13 28.6 L3 24 Z" fill="#e4e4e4" stroke="#a2a2a2" stroke-width="1.7" stroke-linejoin="round"/><path d="M11.6 3.6 L13 15 V28.6 M13 15 L27 13.4" fill="none" stroke="#a8a8a8" stroke-width="1.2"/><rect x="6" y="17.6" width="5" height="3.6" fill="#a4a4a4"/><rect x="18" y="18.6" width="3.6" height="7.6" fill="#a4a4a4"/></svg>
<div style="left:1396px;top:833.5px;width:84px;height:32.5px;background:#fff;border-radius:9px;box-shadow:0 0.5px 2.5px rgba(0,0,0,0.2);"></div><svg style="position:absolute;left:1456.5px;top:845px;" width="14" height="12" viewBox="0 0 14 12" preserveAspectRatio="none"><path d="M3 3.4 L7 7.4 L11 3.4" fill="none" stroke="#b2b2b2" stroke-width="2.3"/></svg><svg style="position:absolute;left:1412px;top:835px;" width="30" height="30" viewBox="0 0 30 30" preserveAspectRatio="none"><path d="M5.6 10.6 L11.6 3.6 H17.6 L23 10.4 V24 L14 28.4 L5.6 24 Z" fill="#e4e4e4" stroke="#a2a2a2" stroke-width="1.8" stroke-linejoin="round"/><path d="M11.6 3.6 L13.6 12 V28.4" fill="none" stroke="#a8a8a8" stroke-width="1.3"/><path d="M15 21 L21.6 11 M15 26 L22 15.6 M18 26 L22 20" stroke="#b4b4b4" stroke-width="1.2"/></svg>
<div style="left:1500px;top:833.5px;width:80px;height:32.5px;background:#fff;border-radius:9px;box-shadow:0 0.5px 2.5px rgba(0,0,0,0.2);"></div><svg style="position:absolute;left:1556.5px;top:845px;" width="14" height="12" viewBox="0 0 14 12" preserveAspectRatio="none"><path d="M3 3.4 L7 7.4 L11 3.4" fill="none" stroke="#b2b2b2" stroke-width="2.3"/></svg><svg style="position:absolute;left:1509px;top:832.6px;" width="38" height="30" viewBox="0 0 38 30" preserveAspectRatio="none"><path d="M4.4 8.8 Q8 9.2 9.6 10.8 H16.6 V7.6 H21.8 V10.8 H31.6 Q35 11 34.4 15 Q32.6 22 27.4 27.4 H13.2 Q8.4 22 7 13.6 Q6 10.8 4.4 8.8 Z" fill="#ededed" stroke="#a2a2a2" stroke-width="1.8" stroke-linejoin="round"/><path d="M28 13.4 Q31.4 13.6 31.6 16 Q31 18.4 29.2 19.8 Z" fill="#a8a8a8"/></svg>
<div style="left:1206px;top:888px;width:465px;height:242px;background:#e4e4e4;"></div>
<div style="left:1208px;top:890px;width:460px;height:216px;background:#fff;"></div>
<div style="left:1208px;top:1108px;width:460px;height:20px;background:#fafafa;"></div>
<div style="left:1208px;top:944px;width:460px;height:2px;background:#e6e6e6;"></div>
<div style="left:1488.5px;top:902px;width:1.5px;height:32px;background:#dcdcdc;"></div>
<div class="t" style="left:1242.5px;top:905.0px;height:28px;line-height:28px;font-size:22.2px;color:#222;font-weight:normal;letter-spacing:0.45px;"><span class="jp" style="color:#222;">データ</span></div>
<div style="left:1214px;top:1112px;width:403px;height:12px;background:#c1c1c1;border-radius:6px;"></div>
<svg style="position:absolute;left:0px;top:0px;pointer-events:none;" width="1716" height="700" viewBox="0 0 1716 700" preserveAspectRatio="none"><path d="M833.87 403.2 L584 541 L879.65 431.13 A435.0 230.7 0 1 0 833.87 403.2 Z" fill="#fff" stroke="#4dafb9" stroke-width="3.5" stroke-linejoin="miter" stroke-miterlimit="10"/><circle cx="932.7" cy="246.3" r="62.5" fill="none" stroke="#333" stroke-width="1.4"/><path d="M1030.4 193 H1155.8 L1092.7 301.7 Z" fill="none" stroke="#222" stroke-width="1.8"/><rect x="1190.5" y="216.7" width="125" height="62.3" fill="none" stroke="#222" stroke-width="1.9"/><path d="M1350 246.6 L1381 192.6 H1444.4 L1475.3 246.6 L1444.4 300.6 H1381 Z" fill="none" stroke="#222" stroke-width="1.6"/><path d="M987 298.4 V296 H995 V301.6 H987 V308.4 H995.6" fill="none" stroke="#222" stroke-width="1.8"/><path d="M1147 298.4 V296 H1155 V301.6 H1147 V308.4 H1155.6" fill="none" stroke="#222" stroke-width="1.8"/><path d="M1307 298.4 V296 H1315 V301.6 H1307 V308.4 H1315.6" fill="none" stroke="#222" stroke-width="1.8"/><path d="M1467 298.4 V296 H1475 V301.6 H1467 V308.4 H1475.6" fill="none" stroke="#222" stroke-width="1.8"/></svg>
<div class="ctr" style="left:832.5px;top:325px;width:200px;height:28px;line-height:28px;"><span class="jp" style="color:#222;">円</span></div>
<div class="ctr" style="left:992.5px;top:325px;width:200px;height:28px;line-height:28px;"><span class="jp" style="color:#222;">三角形</span></div>
<div class="ctr" style="left:1152.5px;top:325px;width:200px;height:28px;line-height:28px;"><span class="jp" style="color:#222;">四角形</span></div>
<div class="ctr" style="left:1312.5px;top:325px;width:200px;height:28px;line-height:28px;"><span class="jp" style="color:#222;">六角形</span></div>
</body></html>
